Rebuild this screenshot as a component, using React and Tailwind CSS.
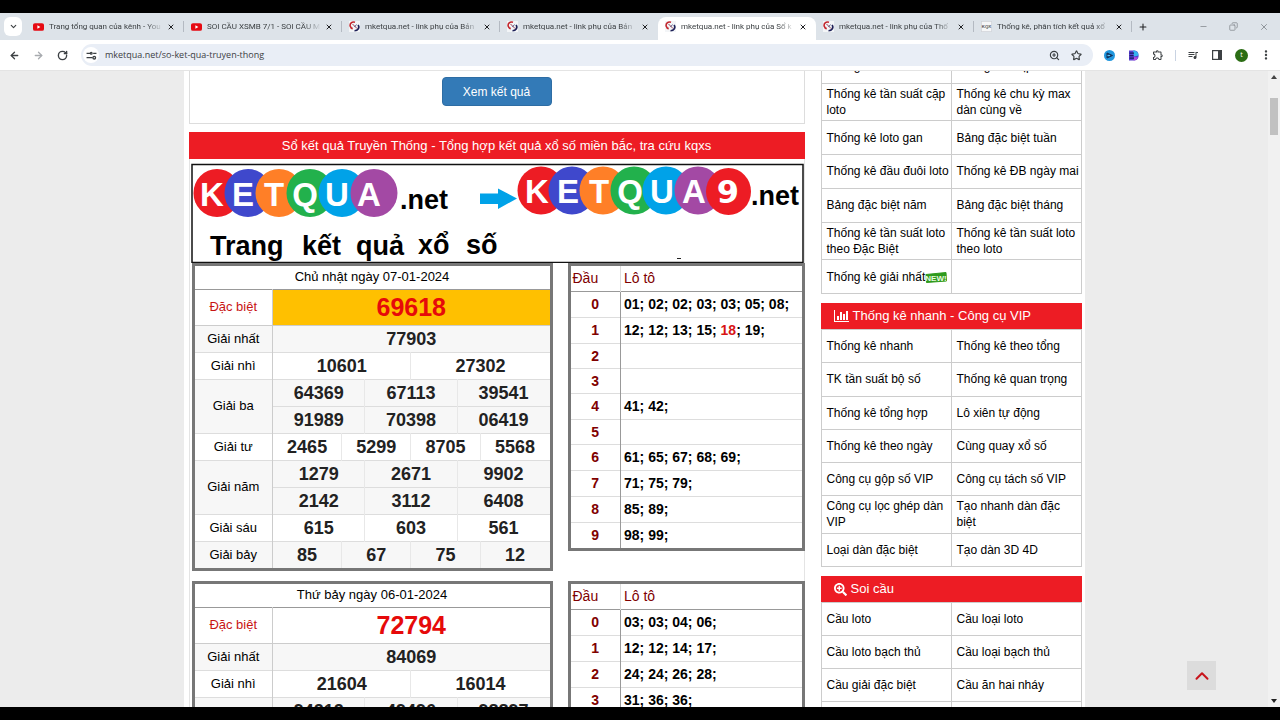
import {
  ArrowLeft,
  ArrowRight,
  ChevronDown,
  ChevronUp,
  Copy,
  Minus,
  Plus,
  RotateCw,
  Star,
  X,
  ZoomIn,
} from 'lucide-react';
import { FaSearchPlus } from 'react-icons/fa';
import { MdMoreVert, MdOutlineExtension, MdQueueMusic } from 'react-icons/md';

const tabs = [
  { icon: 'youtube', title: 'Trang tổng quan của kênh - You' },
  { icon: 'youtube', title: 'SOI CẦU XSMB 7/1 - SOI CẦU M' },
  { icon: 'site', title: 'mketqua.net - link phụ của Bản' },
  { icon: 'site', title: 'mketqua.net - link phụ của Bản' },
  { icon: 'site', title: 'mketqua.net - link phụ của Sổ k', active: true },
  { icon: 'site', title: 'mketqua.net - link phụ của Thố' },
  { icon: 'badge', title: 'Thống kê, phân tích kết quả xổ' },
];

const draws = [
  {
    date: 'Chủ nhật ngày 07-01-2024',
    highlight: true,
    special: '69618',
    prizes: [
      { label: 'Giải nhất', rows: [['77903']] },
      { label: 'Giải nhì', rows: [['10601', '27302']] },
      { label: 'Giải ba', rows: [['64369', '67113', '39541'], ['91989', '70398', '06419']] },
      { label: 'Giải tư', rows: [['2465', '5299', '8705', '5568']] },
      { label: 'Giải năm', rows: [['1279', '2671', '9902'], ['2142', '3112', '6408']] },
      { label: 'Giải sáu', rows: [['615', '603', '561']] },
      { label: 'Giải bảy', rows: [['85', '67', '75', '12']] },
    ],
    loto: [
      ['01', '02', '02', '03', '03', '05', '08'],
      ['12', '12', '13', '15', '18', '19'],
      [],
      [],
      ['41', '42'],
      [],
      ['61', '65', '67', '68', '69'],
      ['71', '75', '79'],
      ['85', '89'],
      ['98', '99'],
    ],
  },
  {
    date: 'Thứ bảy ngày 06-01-2024',
    special: '72794',
    prizes: [
      { label: 'Giải nhất', rows: [['84069']] },
      { label: 'Giải nhì', rows: [['21604', '16014']] },
      { label: '', rows: [['94212', '49496', '98897']] },
    ],
    loto: [
      ['03', '03', '04', '06'],
      ['12', '12', '14', '17'],
      ['24', '24', '26', '28'],
      ['31', '36', '36'],
    ],
  },
];

const statLinks = [
  ['Thống kê', 'Thống kê nhịp loto'],
  ['Thống kê tần suất cặp loto', 'Thống kê chu kỳ max dàn cùng về'],
  ['Thống kê loto gan', 'Bảng đặc biệt tuần'],
  ['Thống kê đầu đuôi loto', 'Thống kê ĐB ngày mai'],
  ['Bảng đặc biệt năm', 'Bảng đặc biệt tháng'],
  ['Thống kê tần suất loto theo Đặc Biệt', 'Thống kê tần suất loto theo loto'],
  ['Thống kê giải nhất', ''],
];

const vipLinks = [
  ['Thống kê nhanh', 'Thống kê theo tổng'],
  ['TK tần suất bộ số', 'Thống kê quan trọng'],
  ['Thống kê tổng hợp', 'Lô xiên tự động'],
  ['Thống kê theo ngày', 'Cùng quay xổ số'],
  ['Công cụ gộp số VIP', 'Công cụ tách số VIP'],
  ['Công cụ lọc ghép dàn VIP', 'Tạo nhanh dàn đặc biệt'],
  ['Loại dàn đặc biệt', 'Tạo dàn 3D 4D'],
];

const cauLinks = [
  ['Cầu loto', 'Cầu loại loto'],
  ['Cầu loto bạch thủ', 'Cầu loại bạch thủ'],
  ['Cầu giải đặc biệt', 'Cầu ăn hai nháy'],
  ['', ''],
];

// number cells share a 12 column grid so rows of 1, 2, 3 and 4 all divide evenly
const spans = { 1: 12, 2: 6, 3: 4, 4: 3 };

function TabIcon({ type }) {
  if (type === 'youtube') {
    return (
      <svg viewBox="0 0 20 16" className="w-[11px] h-[10px] shrink-0">
        <rect y="1" width="20" height="14" rx="3.5" fill="#e60a12" />
        <path d="M8 4.8v6.4l5.4-3.2z" fill="#fff" />
      </svg>
    );
  }
  if (type === 'badge') {
    return (
      <svg viewBox="0 0 20 20" className="w-[11px] h-[11px] shrink-0">
        <rect x="0.5" y="0.5" width="19" height="19" rx="2" fill="#f6f7f8" stroke="#b9bcc0" />
        <text x="10" y="13" textAnchor="middle" fontSize="8" fontWeight="bold" fontFamily="Liberation Sans, sans-serif" fill="#555">
          KQX
        </text>
      </svg>
    );
  }
  return (
    <svg viewBox="0 0 22 22" fill="none" className="w-[11px] h-[11px] shrink-0">
      <rect width="22" height="22" fill="#f3f5f7" />
      <path d="M12 2.5C6 .5 1 5 2.5 10.5c.8 3 3 4.5 5 4.8" stroke="#c3272e" strokeWidth="3.2" />
      <path d="M18 8c4 5 0 11.5-7 11.5" stroke="#1e2158" strokeWidth="3.4" />
      <path d="M7 6l9 9" stroke="#9c4358" strokeWidth="2" />
      <path d="M15 7l-4 5" stroke="#3a3f75" strokeWidth="1.6" />
    </svg>
  );
}

function TabStrip() {
  return (
    <div className="flex h-[27px] bg-[#dde3e9] pl-1 text-[#3c4043]">
      <button type="button" aria-label="Search tabs" className="mt-1 mr-1 flex h-[19px] w-[18px] items-center justify-center rounded-md bg-white">
        <ChevronDown size={9} strokeWidth={3} />
      </button>
      <div className="flex min-w-0 flex-1">
        {tabs.map((tab, i) => (
          <div
            key={i}
            className={
              tab.active
                ? 'mt-1 flex min-w-0 max-w-[158px] flex-1 items-center rounded-t-lg bg-white pb-1 pl-[7px]'
                : 'mt-1 flex min-w-0 max-w-[158px] flex-1 items-center pb-1 pl-[7px]'
            }
          >
            <TabIcon type={tab.icon} />
            <span className="mr-1 ml-[5px] min-w-0 flex-1 overflow-hidden font-[Roboto,'Noto_Sans',sans-serif] text-[8px] leading-4 whitespace-nowrap [mask-image:linear-gradient(to_right,black_85%,transparent)]">
              {tab.title}
            </span>
            <button type="button" aria-label="Close tab" className="mr-2 text-[#202124]">
              <X size={8} strokeWidth={3} />
            </button>
            <span className={tab.active || tabs[i + 1]?.active ? 'h-[11px] w-px' : 'h-[11px] w-px bg-[#b4bac2]'} />
          </div>
        ))}
        <button type="button" aria-label="New tab" className="ml-[6px] text-[#202124]">
          <Plus size={10} strokeWidth={2.5} />
        </button>
      </div>
      <div className="flex items-center gap-[21px] pr-[11px] text-[#80868b]">
        <button type="button" aria-label="Minimize"><Minus size={9} /></button>
        <button type="button" aria-label="Restore"><Copy size={9} className="-scale-x-100" /></button>
        <button type="button" aria-label="Close"><X size={10} /></button>
      </div>
    </div>
  );
}

function Toolbar() {
  return (
    <div className="flex h-[30px] items-center bg-white px-[9px] text-[#3c4043]">
      <div className="flex w-[72px] gap-[13px]">
        <button type="button" aria-label="Back"><ArrowLeft size={11} strokeWidth={2.8} /></button>
        <button type="button" aria-label="Forward" className="text-[#a8abaf]"><ArrowRight size={11} strokeWidth={2.8} /></button>
        <button type="button" aria-label="Reload"><RotateCw size={11} strokeWidth={3} /></button>
      </div>
      <div className="flex h-[22px] flex-1 items-center rounded-full bg-[#e9eef6] pr-[11px] pl-[2px]">
        <span className="flex h-4 w-4 items-center justify-center rounded-full bg-white">
          <svg viewBox="0 0 20 20" fill="none" stroke="currentColor" strokeWidth="2.4" className="h-[11px] w-[11px]">
            <path d="M1 6h7M12 14H1M13 6h6" />
            <circle cx="9.5" cy="6" r="1.6" />
            <circle cx="15" cy="14" r="2.4" />
          </svg>
        </span>
        <input
          aria-label="Address"
          defaultValue="mketqua.net/so-ket-qua-truyen-thong"
          className="ml-[6px] min-w-0 flex-1 bg-transparent text-[9px] text-[#3c4043] outline-none"
        />
        <div className="flex gap-[11px]">
          <button type="button" aria-label="Zoom"><ZoomIn size={11} strokeWidth={2.5} /></button>
          <button type="button" aria-label="Bookmark"><Star size={11} strokeWidth={2.5} /></button>
        </div>
      </div>
      <div className="flex items-center gap-[13px] pl-[11px]">
        <svg viewBox="0 0 22 22" className="h-[11px] w-[11px]">
          <circle cx="11" cy="11" r="11" fill="#2196dd" />
          <path d="M6 6l11 5-11 5z" fill="#1d4f83" stroke="#0f2c55" strokeWidth="2" />
          <path d="M7 11h5" stroke="#58c7f2" strokeWidth="2" />
        </svg>
        <svg viewBox="0 0 22 22" className="h-[11px] w-[11px]">
          <path d="M2 1h11a9 9 0 0 1 8 9 9 9 0 0 1-8 11H2z" fill="#5a3fd0" />
          <path d="M10 1c7 0 11 4 11 10l-9 2z" fill="#35b4ee" />
          <path d="M12 14l8 1c-2 4-5 6-9 6z" fill="#b44be0" />
          <path d="M3 6h9M3 11h8M3 16h9" stroke="#1a1d66" strokeWidth="2.5" />
        </svg>
        <button type="button" aria-label="Extensions"><MdOutlineExtension size={12} /></button>
        <span className="-mx-[2px] h-[11px] w-px bg-[#c9d3e2]" />
        <button type="button" aria-label="Media"><MdQueueMusic size={12} /></button>
        <button type="button" aria-label="Side panel">
          <svg viewBox="0 0 20 20" className="h-[10px] w-[10px]">
            <rect x="1.2" y="1.2" width="17.6" height="17.6" fill="none" stroke="currentColor" strokeWidth="2.4" />
            <path d="M12 1h7v18h-7z" fill="currentColor" />
          </svg>
        </button>
        <span className="flex h-[13px] w-[13px] items-center justify-center rounded-full bg-[#2b6d14] text-[7px] text-white">t</span>
        <button type="button" aria-label="Menu"><MdMoreVert size={14} className="-mx-[2px]" /></button>
      </div>
    </div>
  );
}

const balls = [
  { x: 217, ch: 'K', color: '#ed1c24' },
  { x: 248, ch: 'E', color: '#3f48cc' },
  { x: 279, ch: 'T', color: '#ff7f27' },
  { x: 310, ch: 'Q', color: '#22b14c' },
  { x: 342, ch: 'U', color: '#00a2e8' },
  { x: 374, ch: 'A', color: '#a349a4' },
];

// viewBox keeps the banner's own coordinate space, origin at 191,163
function Banner() {
  return (
    <svg viewBox="191 163 613 100" role="img" aria-label="KETQUA.net" className="block w-full" fontFamily="Liberation Sans, Arial, sans-serif" fontWeight="bold">
      <rect x="192" y="164.5" width="611" height="98" fill="#fff" stroke="#111" strokeWidth="1.5" />
      {balls.map((b) => (
        <g key={b.ch}>
          <ellipse cx={b.x} cy={193} rx="23.5" ry="24" fill={b.color} />
          <text x={b.x - 5} y="206" fontSize="33" fill="#fff" textAnchor="middle">{b.ch}</text>
        </g>
      ))}
      <text x="400" y="209" fontSize="27">.net</text>
      <path d="M480 193.5h18v-5l19 10-19 10.5v-5h-18z" fill="#00a2e8" />
      {balls.map((b) => (
        <g key={b.ch}>
          <ellipse cx={b.x + 324} cy={190.5} rx="23.5" ry="24" fill={b.color} />
          <text x={b.x + 320} y="203" fontSize="33" fill="#fff" textAnchor="middle">{b.ch}</text>
        </g>
      ))}
      <ellipse cx="728.5" cy="191.5" rx="22.5" ry="23.5" fill="#ed1c24" />
      <text x="728" y="203" fontSize="32" fontFamily="DejaVu Sans, sans-serif" fill="#fff" textAnchor="middle">9</text>
      <text x="751" y="204.5" fontSize="27">.net</text>
      <g fontSize="27">
        <text x="210" y="255">Trang</text>
        <text x="302" y="255">kết</text>
        <text x="356" y="255">quả</text>
        <text x="418" y="254">xổ</text>
        <text x="466" y="254">số</text>
      </g>
      <path d="M677 258.5h4" stroke="#222" strokeWidth="1" />
    </svg>
  );
}

function ResultTable({ draw }) {
  return (
    <div className="border-3 border-[#777]">
      <table className="w-full table-fixed border-collapse text-center">
        <colgroup>
          <col className="w-[78px]" />
          {Array.from({ length: 12 }, (_, i) => (
            <col key={i} />
          ))}
        </colgroup>
        <thead>
          <tr className="h-[23px] border-b border-[#999]">
            <th colSpan={13} className="text-[13px] leading-4 font-normal">{draw.date}</th>
          </tr>
        </thead>
        <tbody>
          <tr className="h-[36px] border-b border-[#ccc]">
            <th className="border-r border-[#ccc] text-[13px] leading-4 font-normal text-[#c81414]">Đặc biệt</th>
            <td
              colSpan={12}
              className={
                draw.highlight
                  ? 'bg-[#ffc000] text-[25px] leading-7 font-bold text-[#e60a0a]'
                  : 'text-[25px] leading-7 font-bold text-[#e60a0a]'
              }
            >
              {draw.special}
            </td>
          </tr>
          {draw.prizes.map((prize, p) =>
            prize.rows.map((row, r) => (
              <tr key={`${p}-${r}`} className={p % 2 ? 'h-[27px] border-b border-[#ddd] last:border-b-0' : 'h-[27px] border-b border-[#ddd] bg-[#f7f7f7] last:border-b-0'}>
                {r === 0 && (
                  <th rowSpan={prize.rows.length} className="border-r border-[#ccc] text-[13px] leading-4 font-normal">
                    {prize.label}
                  </th>
                )}
                {row.map((n) => (
                  <td key={n} colSpan={spans[row.length]} className="border-r border-[#e8e8e8] text-lg leading-5 font-bold text-[#222] last:border-r-0">
                    {n}
                  </td>
                ))}
              </tr>
            ))
          )}
        </tbody>
      </table>
    </div>
  );
}

function LotoTable({ draw }) {
  const hit = draw.highlight ? draw.special.slice(-2) : null;

  return (
    <div className="border-3 border-[#777]">
      <table className="w-full table-fixed border-collapse text-sm leading-4">
        <thead>
          <tr className="h-[25px] border-b border-[#999] text-left text-[#800000]">
            <th className="w-[50px] border-r border-[#ddd] pl-[2px] font-normal">Đầu</th>
            <th className="pl-[3px] font-normal">Lô tô</th>
          </tr>
        </thead>
        <tbody>
          {draw.loto.map((nums, i) => (
            <tr key={i} className={nums.length ? 'h-[26px] border-b border-[#ddd] last:border-b-0' : 'h-[25px] border-b border-[#ddd]'}>
              <th className="border-r border-[#999] text-center font-bold text-[#800000]">{i}</th>
              <td className="pl-[3px] font-bold">
                {nums.map((n, k) => (
                  <span key={k}>
                    <span className={n === hit ? 'text-[#d81414]' : ''}>{n}</span>;{' '}
                  </span>
                ))}
              </td>
            </tr>
          ))}
        </tbody>
      </table>
    </div>
  );
}

function NewBadge() {
  return (
    <svg viewBox="0 0 22 11" className="inline-block h-[11px] w-[22px]">
      <path d="M1 2.5L21 0.5 21.5 9 1.5 10.5z" fill="#2f9a1c" stroke="#2f9a1c" strokeLinejoin="round" />
      <text x="11" y="9" textAnchor="middle" fontSize="8" fontWeight="bold" fontFamily="Liberation Sans, sans-serif" fill="#e9fbe0">
        NEW!
      </text>
    </svg>
  );
}

function ChartIcon() {
  return (
    <svg viewBox="0 0 15 12" fill="currentColor" className="h-3 w-[15px]">
      <path d="M0 0h1v11h14v1H0z" />
      <path d="M3 6h2v4H3zM6 2h2v8H6zM9 4h2v6H9zM12 1h2v9h-2z" />
    </svg>
  );
}

function LinkTable({ rows, className = '' }) {
  return (
    <table className={`w-full table-fixed border-collapse bg-white text-[12px] leading-4 ${className}`}>
      <tbody>
        {rows.map((row, i) => (
          <tr key={i} className="h-[33px]">
            {row.map((label, k) => (
              <td key={k} className="w-1/2 border border-[#ccc] py-[2px] pl-[5px]">
                <a href="#">{label}</a>
                {label === 'Thống kê giải nhất' && <NewBadge />}
              </td>
            ))}
          </tr>
        ))}
      </tbody>
    </table>
  );
}

function SideHeading({ icon, children }) {
  return (
    <h2 className="flex h-[26px] items-center gap-1 bg-[#ed1c24] pl-[13px] text-[13px] text-white">
      {icon}
      {children}
    </h2>
  );
}

function Sidebar() {
  return (
    <aside className="flex w-[261px] shrink-0 flex-col gap-[9px]">
      {/* scrolled so that the first row is partly out of view */}
      <LinkTable rows={statLinks} className="-mt-[22px] h-[245px]" />
      <section>
        <SideHeading icon={<ChartIcon />}>Thống kê nhanh - Công cụ VIP</SideHeading>
        <LinkTable rows={vipLinks} className="h-[238px]" />
      </section>
      <section>
        <SideHeading icon={<FaSearchPlus size={13} />}>Soi cầu</SideHeading>
        <LinkTable rows={cauLinks} />
      </section>
    </aside>
  );
}

export default function App() {
  return (
    <div className="flex h-screen flex-col overflow-hidden bg-black py-[13px] font-['Liberation_Sans',Arial,sans-serif] text-black">
      <header className="shrink-0 font-['Open_Sans','Noto_Sans',sans-serif]">
        <TabStrip />
        <Toolbar />
      </header>

      <div className="relative flex min-h-0 flex-1 overflow-hidden border-t border-[#e4e4e4] bg-[#ececec]">
        <div className="min-w-0 flex-1">
          <div className="mx-auto flex max-w-[901px] gap-4 bg-white pr-[3px] pl-[5px]">
            <main className="min-w-0 flex-1">
              <div className="flex justify-center border-x border-b border-[#ddd] pt-[6px] pb-[17px]">
                <button type="button" className="h-[29px] w-[110px] rounded-sm border border-[#2e6da4] bg-[#337ab7] text-[12px] text-white">
                  Xem kết quả
                </button>
              </div>
              <h1 className="mt-2 flex h-[27px] items-center justify-center bg-[#ed1c24] text-[13px] text-white">
                Sổ kết quả Truyền Thống - Tổng hợp kết quả xổ số miền bắc, tra cứu kqxs
              </h1>
              <div className="border-x border-[#e4e4e4] pt-1 pl-px">
                <Banner />
                <div className="-mr-px flex flex-col gap-[10px] pl-px">
                  {draws.map((draw) => (
                    <div key={draw.date} className="flex items-start gap-[15px]">
                      <div className="min-w-0 flex-[361]">
                        <ResultTable draw={draw} />
                      </div>
                      <div className="min-w-0 flex-[237]">
                        <LotoTable draw={draw} />
                      </div>
                    </div>
                  ))}
                </div>
              </div>
            </main>
            <Sidebar />
          </div>
        </div>

        <div className="flex w-3 shrink-0 flex-col items-center bg-[#f1f1f1]">
          <svg viewBox="0 0 6 4" className="mt-1 h-1 w-[6px]"><path d="M0 4l3-4 3 4z" fill="#444" /></svg>
          <div className="mt-[19px] h-[37px] w-2 bg-[#c1c1c1]" />
          <svg viewBox="0 0 6 4" className="mt-auto mb-1 h-1 w-[6px]"><path d="M0 0l3 4 3-4z" fill="#222" /></svg>
        </div>

        <button type="button" aria-label="Lên đầu trang" className="absolute right-16 bottom-[17px] flex h-[29px] w-[29px] items-center justify-center bg-[#dcdcdc] text-[#c8141c]">
          <ChevronUp size={22} strokeWidth={2.2} />
        </button>
      </div>
    </div>
  );
}
